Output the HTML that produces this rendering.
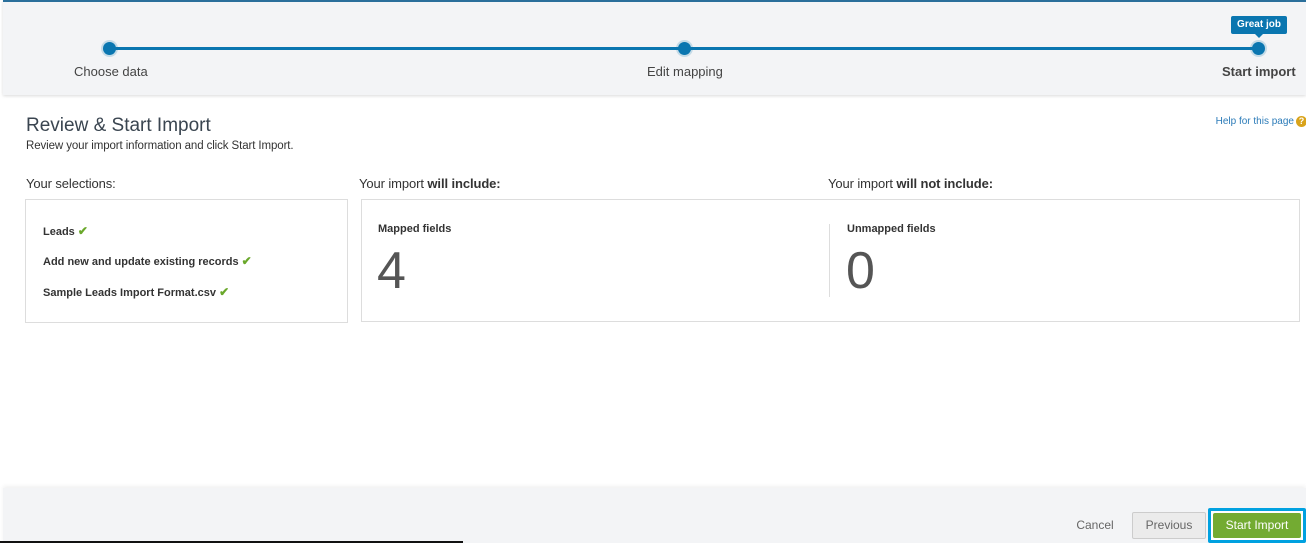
<!DOCTYPE html>
<html><head><style>
*{margin:0;padding:0;box-sizing:border-box}
body{width:1306px;height:543px;overflow:hidden;background:#fff;font-family:"Liberation Sans",Arial,sans-serif;position:relative;color:#333}
.top{position:absolute;left:3px;top:0;width:1303px;height:95px;background:#f3f4f6;border-top:2px solid #2a6f9b;box-shadow:0 1px 3px rgba(0,0,0,.15)}
.line{position:absolute;left:107px;top:45px;width:1150px;height:3px;background:#0a76b0}
.dot{position:absolute;width:13px;height:13px;border-radius:50%;background:#0a76b0;top:40px;box-shadow:0 0 0 2px rgba(10,118,176,.2)}
.lbl{position:absolute;top:62px;font-size:13px;color:#444}
.tip{position:absolute;left:1228px;top:14px;width:56px;height:18px;background:#0a76b0;color:#fff;font-size:10px;font-weight:bold;text-align:center;line-height:18px;border-radius:2px}
.tip:after{content:"";position:absolute;left:24px;bottom:-4px;border:4px solid transparent;border-bottom:0;border-top-color:#0a76b0}
h1{position:absolute;left:26px;top:115px;font-size:19px;font-weight:normal;color:#3a4550}
.sub{position:absolute;left:26px;top:140px;font-size:11.5px;letter-spacing:-0.1px;color:#333}
.help{position:absolute;right:12px;top:116px;font-size:10px;color:#2b7bb8}
.q{position:absolute;right:-1px;top:116px;width:11px;height:11px;border-radius:50%;background:#d9a31a;color:#fff;font-size:9px;font-weight:bold;text-align:center;line-height:11px}
.h{position:absolute;top:176px;font-size:13px;color:#333;letter-spacing:-0.1px}
.box{position:absolute;border:1px solid #ddd;background:#fff}
.it{position:absolute;left:17px;font-size:11px;font-weight:bold;color:#333}
.ck{color:#6aa82b;font-size:12px}
.mf{position:absolute;font-size:11px;font-weight:bold;color:#333;top:23px}
.num{position:absolute;font-size:52px;color:#555;top:41px;line-height:60px}
.foot{position:absolute;left:3px;top:488px;width:1303px;height:55px;background:#f3f4f6;box-shadow:0 -2px 4px rgba(0,0,0,.06)}
.btn{position:absolute;font-size:12px;text-align:center;border-radius:2px}
</style></head><body>
<div class="top">
<div class="line"></div>
<div class="dot" style="left:100px"></div>
<div class="dot" style="left:675px"></div>
<div class="dot" style="left:1249px"></div>
<div class="lbl" style="left:71px">Choose data</div>
<div class="lbl" style="left:644px">Edit mapping</div>
<div class="lbl" style="left:1219px;font-weight:bold">Start import</div>
<div class="tip">Great job</div>
</div>
<h1>Review &amp; Start Import</h1>
<div class="sub">Review your import information and click Start Import.</div>
<div class="help">Help for this page</div><div class="q">?</div>
<div class="h" style="left:26px">Your selections:</div>
<div class="h" style="left:359px">Your import <b>will include:</b></div>
<div class="h" style="left:828px">Your import <b>will not include:</b></div>
<div class="box" style="left:25px;top:199px;width:323px;height:124px">
<div class="it" style="top:24px">Leads <span class="ck">✔</span></div>
<div class="it" style="top:54px">Add new and update existing records <span class="ck">✔</span></div>
<div class="it" style="top:85px">Sample Leads Import Format.csv <span class="ck">✔</span></div>
</div>
<div class="box" style="left:361px;top:199px;width:939px;height:123px">
<div class="mf" style="left:16px">Mapped fields</div>
<div class="num" style="left:15px">4</div>
<div style="position:absolute;left:467px;top:24px;width:1px;height:73px;background:#ddd"></div>
<div class="mf" style="left:485px">Unmapped fields</div>
<div class="num" style="left:484px">0</div>
</div>
<div class="foot">
<div class="btn" style="left:1062px;top:30px;width:60px;color:#666">Cancel</div>
<div class="btn" style="left:1129px;top:24px;width:74px;height:27px;line-height:25px;background:#ebebeb;border:1px solid #ccc;color:#666">Previous</div>
<div class="btn" style="left:1205px;top:20px;width:98px;height:35px;border:3px solid #00a1e0;background:#fff;padding:2px"><div style="background:#73ab32;color:#fff;height:25px;line-height:25px;border-radius:2px">Start Import</div></div>
</div>
<div style="position:absolute;left:0;top:541px;width:463px;height:2px;background:#111"></div>
</body></html>
